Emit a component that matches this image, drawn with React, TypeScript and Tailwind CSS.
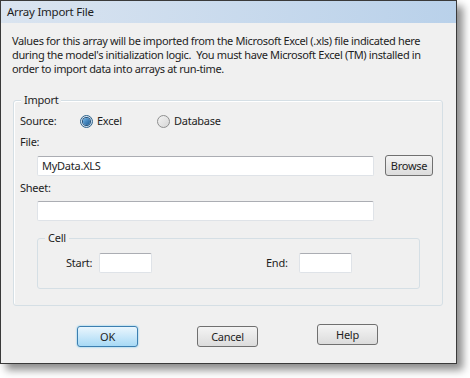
import React from "react";

const FONT = { fontFamily: '"Noto Sans", "Open Sans", sans-serif' };

function Radio({ checked, label }: { checked?: boolean; label: string }) {
  return (
    <span className="flex items-center gap-[4px]">
      <span
        className={
          "flex size-[13px] items-center justify-center rounded-full border " +
          (checked
            ? "border-[#2c628b] bg-gradient-to-br from-[#e6eef7] to-[#b9cde0]"
            : "border-[#8e8f8f] bg-gradient-to-br from-[#f4f4f4] to-[#d6d6d6]")
        }
      >
        {checked && (
          <span className="size-[7px] rounded-full bg-gradient-to-br from-[#6fb4e8] to-[#1b5c95] ring-1 ring-[#20507a]" />
        )}
      </span>
      <span>{label}</span>
    </span>
  );
}

function Input({ value, className }: { value?: string; className: string }) {
  return (
    <div
      className={
        "flex h-[20px] shrink-0 items-center rounded-[2px] border border-[#dfe3e8] border-t-[#abadb3] bg-white px-[4px] " +
        className
      }
    >
      {value}
    </div>
  );
}

function Button({ label, primary, className }: { label: string; primary?: boolean; className: string }) {
  return (
    <div
      className={
        "flex h-[21px] shrink-0 items-center justify-center rounded-[3px] border " +
        (primary
          ? "border-[#3c7fb1] bg-gradient-to-b from-[#eaf6fd] to-[#a7d9f5] shadow-[0_0_2px_#5ec0f0] "
          : "border-[#707070] bg-gradient-to-b from-[#f4f4f4] to-[#dcdcdc] ") +
        className
      }
    >
      {label}
    </div>
  );
}

export default function App() {
  return (
    <div
      className="h-[378px] w-[470px] bg-white text-[11px] leading-[14px] tracking-[-0.25px] text-[#1e1e1e]"
      style={FONT}
    >
      <div className="h-[364px] w-[457px] border border-[#3a3a3a] bg-[#f0f0f0] shadow-[6px_6px_8px_rgba(0,0,0,0.45)]">
        <div className="flex h-[22px] items-center bg-gradient-to-r from-[#dae4f0] to-[#b9d1ea] px-[6px] text-[11.5px]">
          Array Import File
        </div>

        <p className="mt-[11px] whitespace-nowrap px-[11px] leading-[14px] tracking-[-0.35px]">
          Values for this array will be imported from the Microsoft Excel (.xls) file indicated here
          <br />
          during the model's initialization logic.&nbsp; You must have Microsoft Excel (TM) installed in
          <br />
          order to import data into arrays at run-time.
        </p>

        <div className="relative ml-[12px] mt-[24px] w-[430px] rounded-[3px] border border-[#d5dfe5] pb-[16px] shadow-[inset_1px_1px_0_#fff]">
          <span className="absolute -top-[8px] left-[7px] bg-[#f0f0f0] px-[3px]">Import</span>

          <div className="ml-[6px] mt-[13px] flex h-[14px] items-center">
            <span className="w-[60px]">Source:</span>
            <span className="w-[77px]">
              <Radio checked label="Excel" />
            </span>
            <Radio label="Database" />
          </div>

          <div className="ml-[6px] mt-[7px] h-[14px]">File:</div>

          <div className="mt-[6px] flex h-[21px] items-center">
            <Input value="MyData.XLS" className="ml-[23px] w-[337px]" />
            <Button label="Browse" className="ml-[11px] w-[48px]" />
          </div>

          <div className="ml-[6px] mt-[5px] h-[14px]">Sheet:</div>

          <Input className="ml-[23px] mt-[6px] w-[337px]" />

          <div className="relative ml-[23px] mt-[17px] h-[51px] w-[383px] rounded-[3px] border border-[#d5dfe5]">
            <span className="absolute -top-[8px] left-[7px] bg-[#f0f0f0] px-[3px]">Cell</span>
            <div className="mt-[14px] flex items-center">
              <span className="ml-[28px] w-[33px]">Start:</span>
              <Input className="w-[53px]" />
              <span className="ml-[114px] w-[33px]">End:</span>
              <Input className="w-[53px]" />
            </div>
          </div>
        </div>

        <div className="mt-[20px] flex items-start">
          <Button label="OK" primary className="ml-[76px] w-[61px]" />
          <Button label="Cancel" className="ml-[59px] w-[61px]" />
          <Button label="Help" className="-mt-[2px] ml-[59px] w-[61px]" />
        </div>
      </div>
    </div>
  );
}
